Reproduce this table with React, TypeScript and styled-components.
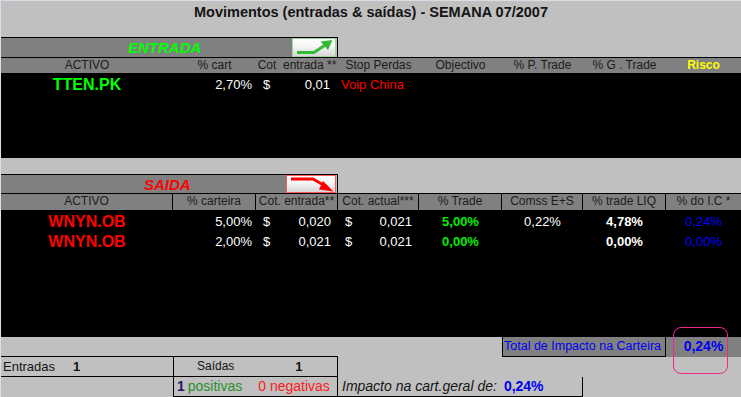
import React from "react";
import styled, { createGlobalStyle } from "styled-components";

const Global = createGlobalStyle`
  html, body { margin: 0; padding: 0; background: #c0c0c0; }
  body { font-family: "Liberation Sans", Arial, sans-serif; }
  * { box-sizing: border-box; }
`;

const COLS = "172px 83px 82px 81px 83px 81px 83px 75px";
const FONT = `"Liberation Sans", Arial, Helvetica, sans-serif`;

const Page = styled.div`
  position: relative;
  width: 741px;
  height: 397px;
  overflow: hidden;
  background: #c0c0c0;
  border-top: 1px solid #dcdce8;
  border-left: 1px solid #dcdce8;
  display: flex;
  flex-direction: column;
  font-family: ${FONT};
  color: #1a1a1a;
`;

const Title = styled.div`
  height: 36px;
  padding-top: 3px;
  text-align: center;
  font-size: 14.5px;
  font-weight: bold;
  line-height: 17px;
  color: #141414;
`;

const SectionRow = styled.div<{ $h: number }>`
  height: ${(p) => p.$h}px;
  display: flex;
`;

const Bar = styled.div`
  width: 337px;
  border-top: 1px solid #000;
  border-right: 1px solid #000;
  background: #c0c0c0;
  display: flex;
`;

const BarLabel = styled.div<{ $color: string; $indent: number }>`
  flex: 1;
  background: #808080;
  padding-left: ${(p) => p.$indent}px;
  color: ${(p) => p.$color};
  font-size: 15px;
  font-weight: bold;
  font-style: italic;
  line-height: 19px;
  white-space: nowrap;
`;

const ArrowButton = styled.div<{ $w: number; $border: string }>`
  width: ${(p) => p.$w}px;
  margin-right: 1px;
  border: 1px solid ${(p) => p.$border};
  background: linear-gradient(#ffffff 0%, #f4f4f4 45%, #d6d6d6 100%);
  display: flex;
`;

const HeaderRow = styled.div<{ $h: number }>`
  height: ${(p) => p.$h}px;
  border-top: 1px solid #000;
  background: #808080;
  display: grid;
  grid-template-columns: ${COLS};
`;

const HeadCell = styled.div<{ $ruled?: boolean; $color?: string; $bold?: boolean }>`
  text-align: center;
  font-size: 12px;
  line-height: 15px;
  white-space: nowrap;
  color: ${(p) => p.$color || "#1c1c1c"};
  font-weight: ${(p) => (p.$bold ? "bold" : "normal")};
  border-right: ${(p) => (p.$ruled ? "1px solid #000" : "none")};
  &:last-child { border-right: none; }
`;

const DataArea = styled.div<{ $h: number }>`
  height: ${(p) => p.$h}px;
  padding-top: 2px;
  background: #000;
`;

const DataRow = styled.div`
  height: 20px;
  display: grid;
  grid-template-columns: ${COLS};
  align-items: center;
`;

const Cell = styled.div<{
  $align?: "left" | "right" | "center";
  $color?: string;
  $bold?: boolean;
  $size?: number;
  $padL?: number;
  $padR?: number;
}>`
  text-align: ${(p) => p.$align || "center"};
  color: ${(p) => p.$color || "#ffffff"};
  font-weight: ${(p) => (p.$bold ? "bold" : "normal")};
  font-size: ${(p) => p.$size || 13}px;
  padding-left: ${(p) => p.$padL || 0}px;
  padding-right: ${(p) => p.$padR || 0}px;
  line-height: 20px;
  white-space: nowrap;
`;

const MoneyCell = styled.div<{ $padL: number; $padR: number }>`
  display: flex;
  justify-content: space-between;
  color: #fff;
  font-size: 13px;
  line-height: 20px;
  padding-left: ${(p) => p.$padL}px;
  padding-right: ${(p) => p.$padR}px;
`;

const Gap = styled.div`
  height: 16px;
`;

const TotalRow = styled.div`
  height: 20px;
  display: flex;
`;

const Blank = styled.div<{ $w: number; $bottom?: boolean }>`
  width: ${(p) => p.$w}px;
  border-bottom: ${(p) => (p.$bottom ? "1px solid #000" : "none")};
`;

const TotalLabel = styled.div`
  width: 164px;
  background: #808080;
  border-left: 1px solid #000;
  border-right: 1px solid #000;
  border-bottom: 1px solid #000;
  color: #0000f0;
  font-size: 12.5px;
  line-height: 19px;
  padding-left: 1px;
  white-space: nowrap;
`;

const TotalValue = styled.div`
  flex: 1;
  background: #808080;
  color: #0000f0;
  font-size: 14px;
  font-weight: bold;
  line-height: 19px;
  text-align: center;
`;

const SummaryRow = styled.div`
  height: 20px;
  display: flex;
`;

const SumCell = styled.div<{ $w: number; $left?: boolean; $right?: boolean; $pad: number }>`
  width: ${(p) => p.$w}px;
  border-bottom: 1px solid #000;
  border-left: ${(p) => (p.$left ? "1px solid #000" : "none")};
  border-right: ${(p) => (p.$right ? "1px solid #000" : "none")};
  padding-left: ${(p) => p.$pad}px;
  line-height: 19px;
  white-space: nowrap;
  color: #141414;
  display: flex;
  align-items: center;
`;

const Txt = styled.span<{ $size: number; $color?: string; $bold?: boolean; $italic?: boolean; $gap?: number }>`
  font-size: ${(p) => p.$size}px;
  color: ${(p) => p.$color || "#141414"};
  font-weight: ${(p) => (p.$bold ? "bold" : "normal")};
  font-style: ${(p) => (p.$italic ? "italic" : "normal")};
  margin-left: ${(p) => p.$gap || 0}px;
`;

const Highlight = styled.div`
  position: absolute;
  left: 672px;
  top: 326px;
  width: 55px;
  height: 47px;
  border: 1px solid #f0288c;
  border-radius: 8px;
  pointer-events: none;
`;

const UpArrow = () => (
  <svg width="42" height="17" viewBox="0 0 42 17">
    <path d="M4 13.5 H21 L33 5.5" fill="none" stroke="#33bb33" strokeWidth="3" strokeLinejoin="round" />
    <polygon points="27.5,2.5 39.5,1 35,11" fill="#33bb33" />
  </svg>
);

const DownArrow = () => (
  <svg width="48" height="16" viewBox="0 0 48 16">
    <path d="M4 3 H26 L40 11" fill="none" stroke="#ff0000" strokeWidth="3" strokeLinejoin="round" />
    <polygon points="36,5 46.5,15.5 32,13.5" fill="#ff0000" />
  </svg>
);

export default function App() {
  return (
    <>
      <Global />
      <Page>
        <Title>Movimentos (entradas &amp; saídas) - SEMANA 07/2007</Title>

        <SectionRow $h={20}>
          <Bar>
            <BarLabel $color="#00ff00" $indent={127}>ENTRADA</BarLabel>
            <ArrowButton $w={44} $border="#9cd89c">
              <UpArrow />
            </ArrowButton>
          </Bar>
        </SectionRow>
        <HeaderRow $h={16}>
          <HeadCell>ACTIVO</HeadCell>
          <HeadCell>% cart</HeadCell>
          <HeadCell>Cot&nbsp;&nbsp;entrada **</HeadCell>
          <HeadCell>Stop Perdas</HeadCell>
          <HeadCell>Objectivo</HeadCell>
          <HeadCell>% P. Trade</HeadCell>
          <HeadCell>% G . Trade</HeadCell>
          <HeadCell $color="#ffff00" $bold>Risco</HeadCell>
        </HeaderRow>
        <DataArea $h={85}>
          <DataRow>
            <Cell $color="#00ff00" $bold $size={16}>TTEN.PK</Cell>
            <Cell $align="right" $padR={4}>2,70%</Cell>
            <MoneyCell $padL={7} $padR={8}>
              <span>$</span>
              <span>0,01</span>
            </MoneyCell>
            <Cell $align="left" $padL={3} $color="#ff0000">Voip China</Cell>
          </DataRow>
        </DataArea>

        <Gap />

        <SectionRow $h={19}>
          <Bar>
            <BarLabel $color="#ff0000" $indent={143}>SAIDA</BarLabel>
            <ArrowButton $w={50} $border="#ff5a5a">
              <DownArrow />
            </ArrowButton>
          </Bar>
        </SectionRow>
        <HeaderRow $h={17}>
          <HeadCell $ruled>ACTIVO</HeadCell>
          <HeadCell $ruled>% carteira</HeadCell>
          <HeadCell $ruled>Cot. entrada**</HeadCell>
          <HeadCell $ruled>Cot. actual***</HeadCell>
          <HeadCell $ruled>% Trade</HeadCell>
          <HeadCell $ruled>Comss E+S</HeadCell>
          <HeadCell $ruled>% trade LIQ</HeadCell>
          <HeadCell $ruled>% do I.C *</HeadCell>
        </HeaderRow>
        <DataArea $h={127}>
          <DataRow>
            <Cell $color="#ff0000" $bold $size={16}>WNYN.OB</Cell>
            <Cell $align="right" $padR={4}>5,00%</Cell>
            <MoneyCell $padL={7} $padR={7}>
              <span>$</span>
              <span>0,020</span>
            </MoneyCell>
            <MoneyCell $padL={7} $padR={7}>
              <span>$</span>
              <span>0,021</span>
            </MoneyCell>
            <Cell $color="#00ee00" $bold>5,00%</Cell>
            <Cell>0,22%</Cell>
            <Cell $bold>4,78%</Cell>
            <Cell $color="#0000ff">0,24%</Cell>
          </DataRow>
          <DataRow>
            <Cell $color="#ff0000" $bold $size={16}>WNYN.OB</Cell>
            <Cell $align="right" $padR={4}>2,00%</Cell>
            <MoneyCell $padL={7} $padR={7}>
              <span>$</span>
              <span>0,021</span>
            </MoneyCell>
            <MoneyCell $padL={7} $padR={7}>
              <span>$</span>
              <span>0,021</span>
            </MoneyCell>
            <Cell $color="#00ee00" $bold>0,00%</Cell>
            <Cell />
            <Cell $bold>0,00%</Cell>
            <Cell $color="#0000ff">0,00%</Cell>
          </DataRow>
        </DataArea>

        <TotalRow>
          <Blank $w={337} $bottom />
          <Blank $w={164} />
          <TotalLabel>Total de Impacto na Carteira</TotalLabel>
          <TotalValue>0,24%</TotalValue>
        </TotalRow>

        <SummaryRow>
          <SumCell $w={172} $pad={2}>
            <Txt $size={13}>Entradas</Txt>
            <Txt $size={13} $bold $gap={18}>1</Txt>
          </SumCell>
          <SumCell $w={165} $left $right $pad={23}>
            <Txt $size={12}>Saídas</Txt>
            <Txt $size={13} $bold $gap={61}>1</Txt>
          </SumCell>
        </SummaryRow>

        <SummaryRow>
          <Blank $w={172} />
          <SumCell $w={165} $left $right $pad={3}>
            <Txt $size={14} $bold $color="#1a1a66">1</Txt>
            <Txt $size={14} $color="#2a8f2a" $gap={3}>positivas</Txt>
            <Txt $size={14} $color="#ff1a1a" $gap={16}>0 negativas</Txt>
          </SumCell>
          <SumCell $w={245} $right $pad={4}>
            <Txt $size={14} $italic>Impacto na cart.geral de:</Txt>
            <Txt $size={14} $bold $color="#0000f0" $gap={7}>0,24%</Txt>
          </SumCell>
        </SummaryRow>

        <Highlight />
      </Page>
    </>
  );
}
